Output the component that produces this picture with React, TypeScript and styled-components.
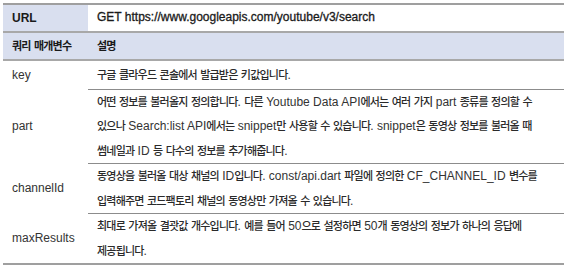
import styled, { createGlobalStyle } from "styled-components";

const GlobalStyle = createGlobalStyle`
  html, body {
    margin: 0;
    padding: 0;
    background: #ffffff;
  }
  body {
    font-family: "Liberation Sans", Arial, "Noto Sans CJK KR", sans-serif;
    font-size: 12px;
    color: #333333;
  }
`;

const Page = styled.div`
  padding: 3px 3px 0 3px;
  width: 561px;
`;

const Table = styled.table`
  width: 561px;
  border-collapse: collapse;
  table-layout: fixed;
  border-top: 2px solid #9f9f9f;
  border-bottom: 2px solid #9f9f9f;
`;

const Row = styled.tr<{ $h: number; $shade?: boolean; $line?: "thick" | "thin" }>`
  height: ${({ $h }) => $h}px;
  background: ${({ $shade }) => ($shade ? "#d9dfef" : "transparent")};
  border-bottom: ${({ $line }) => ($line === "thick" ? "2px solid #a8a8a8" : "none")};
`;

const LabelCell = styled.td<{ $shade?: boolean; $bold?: boolean }>`
  width: 76px;
  padding: 0 0 0 9px;
  vertical-align: middle;
  background: ${({ $shade }) => ($shade ? "#d9dfef" : "transparent")};
  color: ${({ $bold }) => ($bold ? "#1a1a1a" : "#333333")};
  font-weight: ${({ $bold }) => ($bold ? "bold" : "normal")};
  line-height: 23px;
`;

const DescCell = styled.td<{ $bold?: boolean; $line?: boolean; $strong?: boolean }>`
  padding: 0 6px 0 9px;
  vertical-align: middle;
  line-height: 23.5px;
  color: ${({ $bold, $strong }) => ($bold || $strong ? "#1a1a1a" : "#333333")};
  font-weight: ${({ $bold }) => ($bold ? "bold" : "normal")};
  -webkit-text-stroke: ${({ $strong }) => ($strong ? "0.3px #1a1a1a" : "0")};
  border-bottom: ${({ $line }) => ($line ? "1px solid #8c8c8c" : "none")};
  white-space: nowrap;
`;

const Ko = styled.span<{ $bold?: boolean }>`
  font-family: "Noto Sans CJK KR", sans-serif;
  font-size: 11px;
  font-weight: ${({ $bold }) => ($bold ? 700 : 500)};
  letter-spacing: -0.8px;
  color: ${({ $bold }) => ($bold ? "#1a1a1a" : "#2a2a2a")};
`;

function T({ text, bold }: { text: string; bold?: boolean }) {
  const parts = text.split(/([\u1100-\u11FF\u3130-\u318F\uAC00-\uD7AF]+)/);
  return (
    <>
      {parts.map((p, i) =>
        i % 2 ? (
          <Ko key={i} $bold={bold}>
            {p}
          </Ko>
        ) : (
          p
        )
      )}
    </>
  );
}

const params = [
  {
    name: "key",
    h: 29,
    lines: ["구글 클라우드 콘솔에서 발급받은 키값입니다."],
  },
  {
    name: "part",
    h: 70,
    lines: [
      "어떤 정보를 불러올지 정의합니다. 다른 Youtube Data API에서는 여러 가지 part 종류를 정의할 수",
      "있으나 Search:list API에서는 snippet만 사용할 수 있습니다. snippet은 동영상 정보를 불러올 때",
      "썸네일과 ID 등 다수의 정보를 추가해줍니다.",
    ],
  },
  {
    name: "channelId",
    h: 50,
    lines: [
      "동영상을 불러올 대상 채널의 ID입니다. const/api.dart 파일에 정의한 CF_CHANNEL_ID 변수를",
      "입력해주면 코드팩토리 채널의 동영상만 가져올 수 있습니다.",
    ],
  },
  {
    name: "maxResults",
    h: 47,
    lines: [
      "최대로 가져올 결괏값 개수입니다. 예를 들어 50으로 설정하면 50개 동영상의 정보가 하나의 응답에",
      "제공됩니다.",
    ],
  },
];

export default function App() {
  return (
    <>
      <GlobalStyle />
      <Page>
        <Table>
          <tbody>
            <Row $h={28} $line="thick">
              <LabelCell $shade $bold>
                URL
              </LabelCell>
              <DescCell $strong>GET https://www.googleapis.com/youtube/v3/search</DescCell>
            </Row>
            <Row $h={28} $shade $line="thick">
              <LabelCell $bold>
                <T text="쿼리 매개변수" bold />
              </LabelCell>
              <DescCell $bold>
                <T text="설명" bold />
              </DescCell>
            </Row>
            {params.map((p, idx) => (
              <Row key={p.name} $h={p.h}>
                <LabelCell>{p.name}</LabelCell>
                <DescCell $line={idx < params.length - 1}>
                  {p.lines.map((l, i) => (
                    <div key={i}>
                      <T text={l} />
                    </div>
                  ))}
                </DescCell>
              </Row>
            ))}
          </tbody>
        </Table>
      </Page>
    </>
  );
}
